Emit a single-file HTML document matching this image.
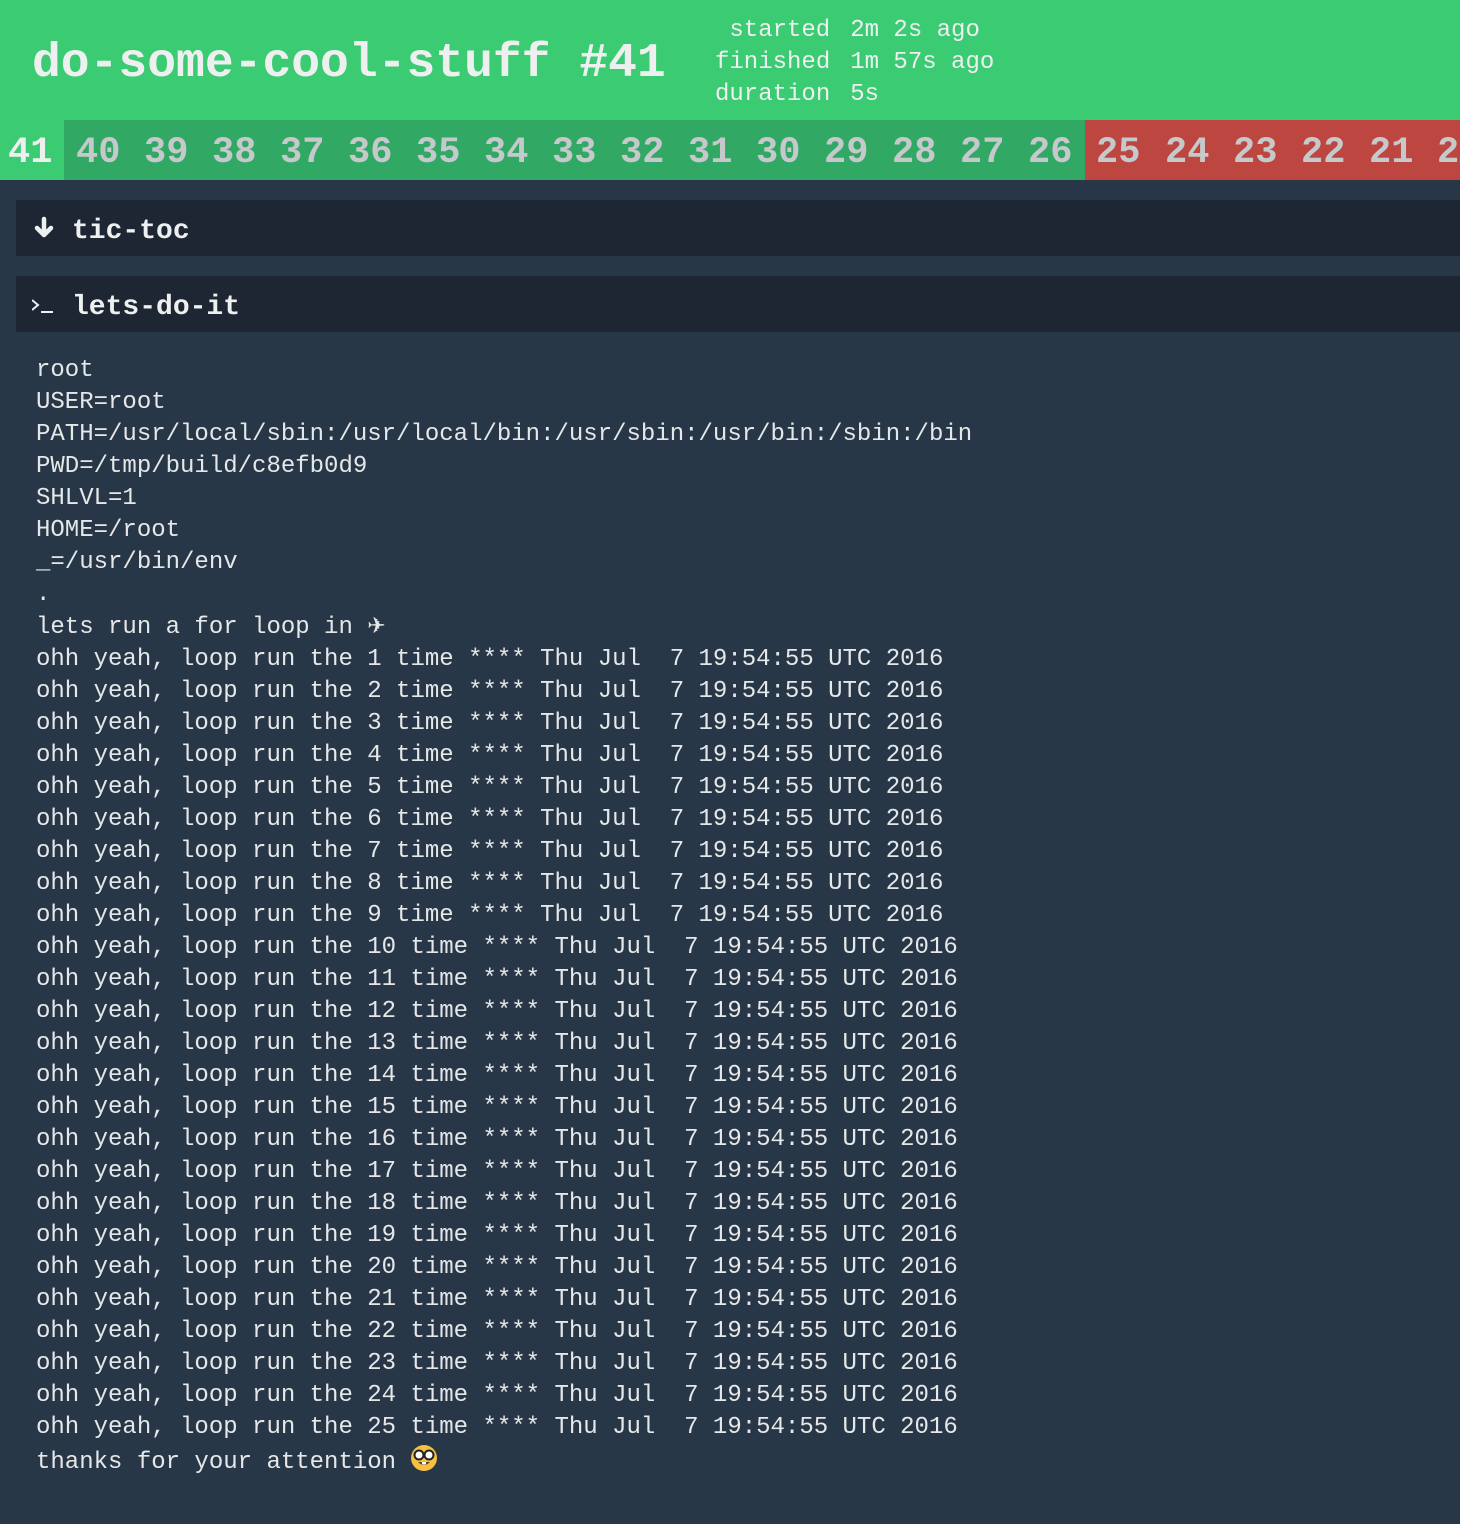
<!DOCTYPE html>
<html><head><meta charset="utf-8"><style>
*{margin:0;padding:0;box-sizing:border-box}
body{width:1460px;height:1524px;background:#273747;overflow:hidden;font-family:"Liberation Mono",monospace;color:#e6e7e8}
.hdr{height:120px;background:#3acb73;position:relative}
.title{position:absolute;left:32px;top:36px;font-size:48px;font-weight:bold;line-height:56px;color:#eef0f0;white-space:pre}
.meta{position:absolute;left:715px;top:15px;font-size:24px;line-height:32px;color:#eef0f0}
.meta td{padding:0;white-space:pre}
.meta td.k{text-align:right;padding-right:20px}
.hist{height:60px;display:flex;white-space:nowrap;overflow:hidden;font-size:37px;font-weight:bold;line-height:60px;color:#c6c9cb}
.hist span{display:block;width:68px;padding-left:12px;padding-top:3px;flex:none}
.hist span.cur{width:64px;padding-left:8px;background:#3acb73;color:#eef0f0}
.hist span.g{background:#32a865}
.hist span.r{background:#bd4740}
.step{position:absolute;left:16px;width:1444px;height:56px;background:#1d2632;font-size:28px;font-weight:bold;line-height:56px;color:#eef0f0}
.step .ic{position:absolute;left:16px;top:0}
.step .t{position:absolute;left:56px;top:4px}
pre{position:absolute;left:36px;top:355px;font-family:"Liberation Mono",monospace;font-size:24px;line-height:32px;color:#e6e7e8}
</style></head><body>
<div class="hdr">
<div class="title">do-some-cool-stuff #41</div>
<table class="meta" cellspacing="0"><tr><td class="k">started</td><td>2m 2s ago</td></tr><tr><td class="k">finished</td><td>1m 57s ago</td></tr><tr><td class="k">duration</td><td>5s</td></tr></table>
</div>
<div class="hist"><span class="cur">41</span><span class="g">40</span><span class="g">39</span><span class="g">38</span><span class="g">37</span><span class="g">36</span><span class="g">35</span><span class="g">34</span><span class="g">33</span><span class="g">32</span><span class="g">31</span><span class="g">30</span><span class="g">29</span><span class="g">28</span><span class="g">27</span><span class="g" style="width:69px">26</span><span class="r" style="padding-left:11px">25</span><span class="r">24</span><span class="r">23</span><span class="r">22</span><span class="r">21</span><span class="r">20</span></div>
<div class="step" style="top:200px"><span class="ic"><svg width="24" height="56" viewBox="0 0 24 56"><path d="M12 19v16M5 28l7 7 7-7" stroke="#eef0f0" stroke-width="4.5" fill="none" stroke-linecap="round" stroke-linejoin="round"/></svg></span><span class="t">tic-toc</span></div>
<div class="step" style="top:276px"><span class="ic"><svg width="28" height="56" viewBox="0 0 28 56"><path d="M0 24l6 5-6 5" stroke="#eef0f0" stroke-width="2" fill="none"/><path d="M9 36h12" stroke="#eef0f0" stroke-width="2"/></svg></span><span class="t">lets-do-it</span></div>
<pre>root
USER=root
PATH=/usr/local/sbin:/usr/local/bin:/usr/sbin:/usr/bin:/sbin:/bin
PWD=/tmp/build/c8efb0d9
SHLVL=1
HOME=/root
_=/usr/bin/env
.
lets run a for loop in <span style="font-family:'DejaVu Sans',sans-serif;font-size:22px">✈</span>
ohh yeah, loop run the 1 time **** Thu Jul  7 19:54:55 UTC 2016
ohh yeah, loop run the 2 time **** Thu Jul  7 19:54:55 UTC 2016
ohh yeah, loop run the 3 time **** Thu Jul  7 19:54:55 UTC 2016
ohh yeah, loop run the 4 time **** Thu Jul  7 19:54:55 UTC 2016
ohh yeah, loop run the 5 time **** Thu Jul  7 19:54:55 UTC 2016
ohh yeah, loop run the 6 time **** Thu Jul  7 19:54:55 UTC 2016
ohh yeah, loop run the 7 time **** Thu Jul  7 19:54:55 UTC 2016
ohh yeah, loop run the 8 time **** Thu Jul  7 19:54:55 UTC 2016
ohh yeah, loop run the 9 time **** Thu Jul  7 19:54:55 UTC 2016
ohh yeah, loop run the 10 time **** Thu Jul  7 19:54:55 UTC 2016
ohh yeah, loop run the 11 time **** Thu Jul  7 19:54:55 UTC 2016
ohh yeah, loop run the 12 time **** Thu Jul  7 19:54:55 UTC 2016
ohh yeah, loop run the 13 time **** Thu Jul  7 19:54:55 UTC 2016
ohh yeah, loop run the 14 time **** Thu Jul  7 19:54:55 UTC 2016
ohh yeah, loop run the 15 time **** Thu Jul  7 19:54:55 UTC 2016
ohh yeah, loop run the 16 time **** Thu Jul  7 19:54:55 UTC 2016
ohh yeah, loop run the 17 time **** Thu Jul  7 19:54:55 UTC 2016
ohh yeah, loop run the 18 time **** Thu Jul  7 19:54:55 UTC 2016
ohh yeah, loop run the 19 time **** Thu Jul  7 19:54:55 UTC 2016
ohh yeah, loop run the 20 time **** Thu Jul  7 19:54:55 UTC 2016
ohh yeah, loop run the 21 time **** Thu Jul  7 19:54:55 UTC 2016
ohh yeah, loop run the 22 time **** Thu Jul  7 19:54:55 UTC 2016
ohh yeah, loop run the 23 time **** Thu Jul  7 19:54:55 UTC 2016
ohh yeah, loop run the 24 time **** Thu Jul  7 19:54:55 UTC 2016
ohh yeah, loop run the 25 time **** Thu Jul  7 19:54:55 UTC 2016
thanks for your attention <svg width="28" height="28" viewBox="0 0 28 28" style="vertical-align:-4px"><circle cx="14" cy="14" r="13" fill="#f5c13e"/><circle cx="9" cy="11" r="4.5" fill="#fff" stroke="#222" stroke-width="2"/><circle cx="19" cy="11" r="4.5" fill="#fff" stroke="#222" stroke-width="2"/><path d="M13.5 11h1" stroke="#222" stroke-width="2"/><path d="M8 18q6 6 12 0z" fill="#6b3a1d"/><rect x="12" y="18" width="4" height="2.5" fill="#fff"/></svg></pre>
</body></html>
